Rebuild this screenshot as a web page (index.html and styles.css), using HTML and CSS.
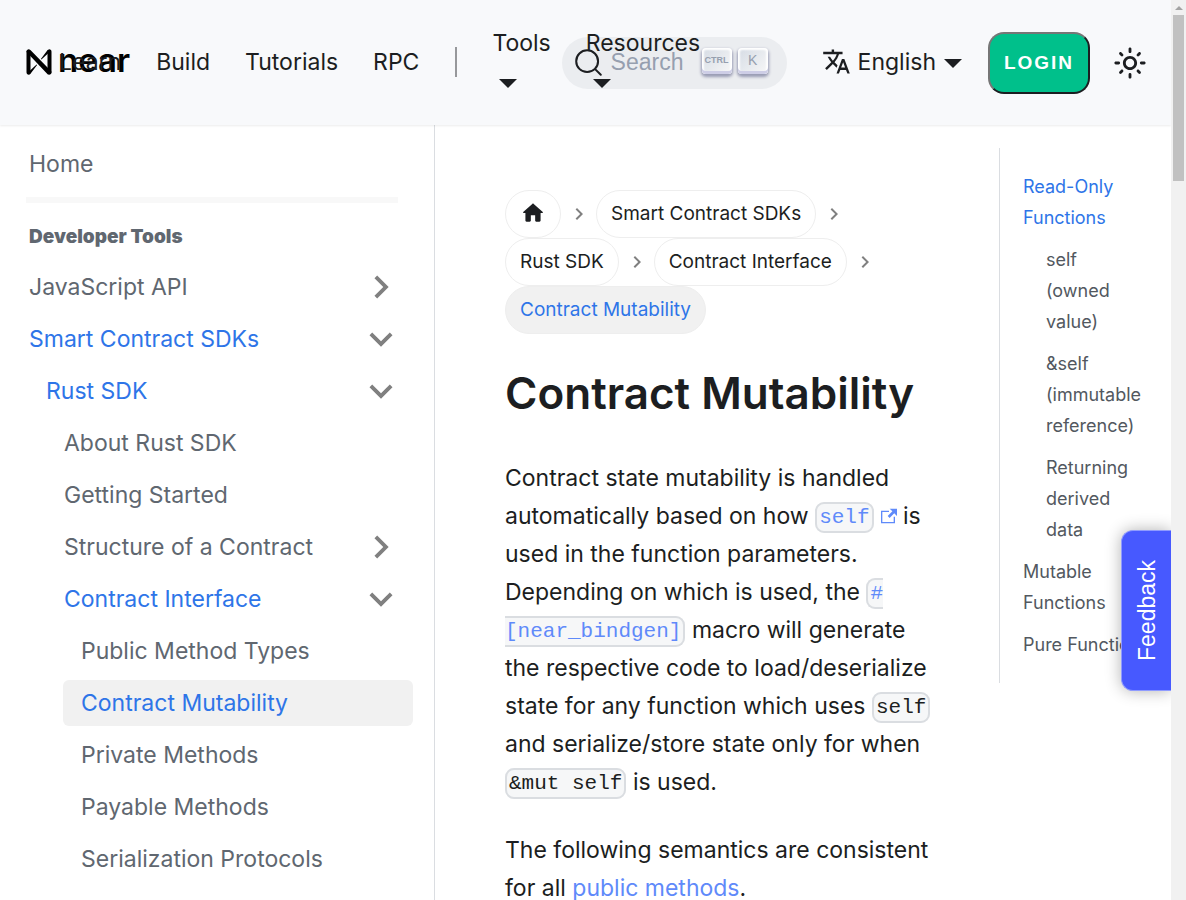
FILE: index.html
```html
<!DOCTYPE html>
<html lang="en">
<head>
<meta charset="utf-8">
<title>Contract Mutability | NEAR Documentation</title>
<link rel="stylesheet" href="styles.css">
</head>
<body>
<svg width="0" height="0" class="defs" aria-hidden="true">
  <symbol id="chev" viewBox="0 0 24 24"><path d="M10 6 8.59 7.41 13.17 12l-4.58 4.59L10 18l6-6z"/></symbol>
</svg>
<div class="page">
  <header class="navbar">
    <nav class="nav-left" aria-label="Main">
      <a class="brand" href="#" aria-label="near home">
        <svg class="brand-mark" viewBox="0 0 26 26"><path fill="none" stroke="#000" stroke-width="4" stroke-linejoin="round" stroke-linecap="round" d="M2.5 2.5v21M23.5 2.5v21"/><path fill="#000" d="M.5 3Q.5.3 3 .4q1 0 1.900 1.200L25.400 22.500q.2 3-2.400 3.100-1.200 0-2.100-1.200z"/><path fill="#000" d="M.8 24.500 10.600 15.600l.5.5L4.300 25q-2 1.300-3.500-.5zM25.300 1.500 15.400 10.400l-.5-.5L21.600 1q2-1.300 3.700.5z"/></svg>
        <span class="brand-name">near</span>
      </a>
      <a class="nav-link" href="#">Learn</a>
      <a class="nav-link" href="#">Build</a>
      <a class="nav-link" href="#">Tutorials</a>
      <a class="nav-link" href="#">RPC</a>
      <span class="nav-sep"></span>
      <a class="nav-link drop" href="#">Tools</a>
      <a class="nav-link drop" href="#">Resources</a>
    </nav>
    <div class="nav-right">
      <button class="search" type="button">
        <svg class="search-icon" viewBox="0 0 20 20"><path d="M14.386 14.386l4.088 4.088-4.088-4.088c-2.942 2.942-7.711 2.942-10.653 0-2.942-2.942-2.942-7.711 0-10.653 2.942-2.942 7.711-2.942 10.653 0 2.942 2.942 2.942 7.711 0 10.653z" fill="none" stroke="currentColor" stroke-width="1.400" stroke-linecap="round" stroke-linejoin="round"/></svg>
        <span class="search-text">Search</span>
        <kbd class="key key-ctrl">CTRL</kbd><kbd class="key">K</kbd>
      </button>
      <a class="language" href="#">
        <svg class="lang-icon" viewBox="0 0 24 24"><path d="M12.870 15.070l-2.540-2.510.03-.03c1.740-1.940 2.980-4.170 3.710-6.530H17V4h-7V2H8v2H1v1.990h11.170C11.500 7.920 10.440 9.750 9 11.350 8.070 10.320 7.300 9.190 6.690 8h-2c.73 1.630 1.730 3.170 2.980 4.560l-5.090 5.020L4 19l5-5 3.110 3.110.76-2.040zM18.500 10h-2L12 22h2l1.120-3h4.750L21 22h2l-4.500-12zm-2.620 7l1.620-4.330L19.120 17h-3.240z"/></svg>
        <span>English</span>
      </a>
      <button class="login" type="button">LOGIN</button>
      <button class="theme" type="button" aria-label="Switch theme">
        <svg viewBox="0 0 24 24"><path d="M12,9c1.650,0,3,1.350,3,3s-1.350,3-3,3s-3-1.350-3-3S10.350,9,12,9 M12,7c-2.760,0-5,2.240-5,5s2.240,5,5,5s5-2.240,5-5 S14.760,7,12,7L12,7z M2,13l2,0c0.550,0,1-0.450,1-1s-0.450-1-1-1l-2,0c-0.550,0-1,0.450-1,1S1.450,13,2,13z M20,13l2,0c0.550,0,1-0.450,1-1 s-0.450-1-1-1l-2,0c-0.550,0-1,0.450-1,1S19.450,13,20,13z M11,2v2c0,0.550,0.450,1,1,1s1-0.450,1-1V2c0-0.550-0.450-1-1-1S11,1.450,11,2z M11,20v2c0,0.550,0.450,1,1,1s1-0.450,1-1v-2c0-0.550-0.450-1-1-1C11.450,19,11,19.450,11,20z M5.990,4.580c-0.390-0.390-1.030-0.390-1.410,0 c-0.390,0.390-0.390,1.030,0,1.410l1.060,1.060c0.390,0.390,1.030,0.390,1.410,0s0.390-1.030,0-1.410L5.990,4.580z M18.360,16.950 c-0.390-0.390-1.030-0.390-1.410,0c-0.390,0.390-0.390,1.030,0,1.410l1.060,1.060c0.390,0.390,1.030,0.390,1.410,0c0.390-0.390,0.390-1.030,0-1.410 L18.360,16.950z M19.420,5.990c0.390-0.390,0.390-1.030,0-1.410c-0.390-0.390-1.030-0.390-1.410,0l-1.060,1.060c-0.390,0.390-0.390,1.030,0,1.410 s1.030,0.390,1.410,0L19.420,5.990z M7.050,18.360c0.390-0.390,0.390-1.030,0-1.410c-0.390-0.390-1.030-0.390-1.410,0l-1.060,1.060 c-0.390,0.390-0.390,1.030,0,1.410s1.030,0.390,1.410,0L7.050,18.360z"/></svg>
      </button>
    </div>
  </header>
  <div class="body">
    <aside class="sidebar">
      <ul class="menu">
        <li><a class="item" href="#">Home</a></li>
        <li class="rule"></li>
        <li class="heading">Developer Tools</li>
        <li><a class="item" href="#">JavaScript API<svg class="arrow"><use href="#chev"/></svg></a></li>
        <li><a class="item on" href="#">Smart Contract SDKs<svg class="arrow open"><use href="#chev"/></svg></a>
          <ul class="menu">
            <li><a class="item on" href="#">Rust SDK<svg class="arrow open"><use href="#chev"/></svg></a>
              <ul class="menu">
                <li><a class="item" href="#">About Rust SDK</a></li>
                <li><a class="item" href="#">Getting Started</a></li>
                <li><a class="item" href="#">Structure of a Contract<svg class="arrow"><use href="#chev"/></svg></a></li>
                <li><a class="item on" href="#">Contract Interface<svg class="arrow open"><use href="#chev"/></svg></a>
                  <ul class="menu">
                    <li><a class="item" href="#">Public Method Types</a></li>
                    <li><a class="item on current" href="#">Contract Mutability</a></li>
                    <li><a class="item" href="#">Private Methods</a></li>
                    <li><a class="item" href="#">Payable Methods</a></li>
                    <li><a class="item" href="#">Serialization Protocols</a></li>
                  </ul>
                </li>
              </ul>
            </li>
          </ul>
        </li>
      </ul>
    </aside>
    <main class="content">
      <nav class="crumbs" aria-label="Breadcrumbs">
        <a class="crumb" href="#" aria-label="Home page"><svg class="home" viewBox="0 0 24 24"><path d="M10 19v-5h4v5c0 .55.45 1 1 1h3c.55 0 1-.45 1-1v-7h1.700c.46 0 .68-.57.33-.87L12.670 3.600c-.38-.34-.96-.34-1.340 0l-8.360 7.530c-.34.3-.13.87.33.87H5v7c0 .55.45 1 1 1h3c.55 0 1-.45 1-1z"/></svg></a>
        <svg class="sep"><use href="#chev"/></svg>
        <a class="crumb" href="#">Smart Contract SDKs</a>
        <svg class="sep"><use href="#chev"/></svg>
        <a class="crumb" href="#">Rust SDK</a>
        <svg class="sep"><use href="#chev"/></svg>
        <a class="crumb" href="#">Contract Interface</a>
        <svg class="sep"><use href="#chev"/></svg>
        <span class="crumb active">Contract Mutability</span>
      </nav>
      <h1>Contract Mutability</h1>
      <p>Contract state mutability is handled automatically based on how <a href="#"><code>self</code><svg class="ext" viewBox="0 0 24 24"><path d="M21 13v10h-21v-19h12v2h-10v15h17v-8h2zm3-12h-10.988l4.035 4-6.977 7.070 2.828 2.828 6.977-7.070 4.125 4.172v-11z"/></svg></a> is used in the function parameters. Depending on which is used, the <a href="#"><code>#[near_bindgen]</code></a> macro will generate the respective code to load/deserialize state for any function which uses <code>self</code> and serialize/store state only for when <code>&amp;mut self</code> is used.</p>
      <p>The following semantics are consistent for all <a href="#">public methods</a>.</p>
    </main>
    <nav class="toc" aria-label="On this page">
      <ul>
        <li><a class="on" href="#">Read-Only Functions</a>
          <ul>
            <li><a href="#">self (owned value)</a></li>
            <li><a href="#">&amp;self (immutable reference)</a></li>
            <li><a href="#">Returning derived data</a></li>
          </ul>
        </li>
        <li><a href="#">Mutable Functions</a></li>
        <li><a class="nowrap" href="#">Pure Functions</a></li>
      </ul>
    </nav>
  </div>
  <button class="feedback" type="button">Feedback</button>
</div>
<div class="scrollbar" aria-hidden="true"><span class="scroll-up"></span><span class="thumb"></span></div>
</body>
</html>
```
FILE: styles.css
```css
* { box-sizing: border-box; }
body {
  margin: 0;
  height: 100vh;
  overflow: hidden;
  display: flex;
  font: 400 23px/38px Inter, "Liberation Sans", sans-serif;
  color: #1c1e21;
  background: #fff;
}
a { color: inherit; text-decoration: none; }
ul { list-style: none; margin: 0; padding: 0; }
button { font: inherit; color: inherit; cursor: pointer; }
.defs { position: absolute; }
.page {
  flex: 1;
  min-width: 0;
  position: relative;
  display: flex;
  flex-direction: column;
}

.navbar {
  flex: none;
  height: 125px;
  padding: 0 22px 0 26px;
  display: flex;
  align-items: center;
  background: #f8f9fb;
  box-shadow: 0 1px 2px rgba(0, 0, 0, .08);
  z-index: 2;
}
.nav-left {
  flex: 1 1 0;
  min-width: 0;
  display: flex;
  align-items: center;
  padding-bottom: 2px;
  position: relative;
  z-index: 1;
}
.brand {
  flex: none;
  width: 16px;
  display: flex;
  align-items: center;
  gap: 6px;
  color: #000;
}
.brand-mark { flex: none; width: 26px; height: 26px; }
.brand-name { font-size: 33px; font-weight: 600; line-height: 36px; padding-bottom: 4px; }
.nav-link { flex: none; padding: 0 18px 0 17px; line-height: 36px; }
.nav-sep { flex: none; width: 2px; height: 30px; margin: 0 18px; background: #97989b; }
.drop::after, .language::after {
  content: "";
  display: block;
  border: 9px solid transparent;
  border-top-color: currentColor;
  border-bottom: 0;
}
.drop::after { margin: 18px 7px 10px; width: 0; }
.nav-right { flex: none; display: flex; align-items: center; }
.search {
  width: 225px;
  height: 52px;
  padding: 0 19px 0 12px;
  border: 0;
  border-radius: 26px;
  background: #ebedf0;
  display: flex;
  align-items: center;
}
.search-icon { width: 29px; height: 29px; margin-right: 8px; }
.search-text { flex: 1; padding-bottom: 2px; text-align: left; color: #969faf; font-family: "Liberation Sans", sans-serif; }
.key {
  width: 30px;
  height: 26px;
  margin: 0 0 3px 6px;
  border-radius: 4px;
  background: linear-gradient(-225deg, #d5dbe4, #f8f8f8);
  box-shadow: inset 0 -3px 0 #cdcde6, inset 0 0 2px 2px #fff, 0 2px 3px 1px rgba(30, 35, 90, .4);
  color: #969faf;
  font: 14px/24px "Liberation Sans", sans-serif;
  text-align: center;
}
.key-ctrl { font: 700 9px/25px "Liberation Sans", sans-serif; }
.language { display: flex; align-items: center; margin-left: 35px; padding-bottom: 2px; }
.lang-icon { width: 29px; height: 29px; margin-right: 7px; fill: currentColor; }
.language::after { margin: 4px 0 0 8px; }
.login {
  width: 102px;
  height: 62px;
  margin: 0 17px 0 26px;
  padding: 0;
  border: 2px outset #1c1e21;
  border-color: #767676 #1c1e21 #1c1e21 #767676;
  border-style: solid;
  border-radius: 16px;
  background: #00c08b;
  color: #fff;
  font: 700 19px/38px "Liberation Sans", sans-serif;
  letter-spacing: 2px;
}
.theme { width: 46px; height: 46px; padding: 6px; margin-right: -4px; border: 0; background: none; }
.theme svg { width: 34px; height: 34px; display: block; fill: currentColor; }

.body { flex: 1; min-height: 0; display: flex; }
.sidebar {
  flex: none;
  width: 435px;
  padding: 16px 21px 0 11px;
  border-right: 1px solid #dadde1;
  color: #606770;
}
.item {
  display: flex;
  align-items: center;
  justify-content: space-between;
  height: 46px;
  margin-bottom: 6px;
  padding: 0 17px 0 18px;
  border-radius: 6px;
}
.menu .menu { padding-left: 17px; }
.menu .menu .menu { padding-left: 18px; margin-top: 1px; }
.menu .menu .menu .menu { padding-left: 17px; }
.on { color: #2e75e8; }
.current { background: #f1f1f1; }
.rule { height: 6px; margin: 10px 15px 16px; background: #f8f8f8; }
.heading { padding: 0 18px; margin-bottom: 9px; font-size: 19px; font-weight: 900; line-height: 36px; }
.arrow { width: 46px; height: 46px; margin-right: -8px; fill: #808080; }
.open { transform: rotate(90deg); }

.content { flex: 1; min-width: 0; padding: 65px 64px 0 70px; }
.crumbs { display: flex; flex-wrap: wrap; align-items: center; font-size: 19px; }
.crumb {
  padding: 0 14px;
  line-height: 46px;
  border: 1px solid #eee;
  border-radius: 24px;
}
.crumb.active { background: #f1f1f1; color: #2e75e8; }
.home { display: block; width: 26px; height: 44px; margin-bottom: 2px; fill: currentColor; }
.sep { width: 24px; height: 24px; margin: 0 5px 0 6px; fill: #808080; }
h1 { margin: 31px 0 38px; font-size: 44px; font-weight: 600; line-height: 56px; }
p { margin: 0 0 30px; }
p a { color: #5f8afa; }
code {
  padding: 2px;
  border: 2px solid #dadde1;
  border-radius: 9px;
  background: #f6f7f8;
  font: 21px "Liberation Mono", monospace;
  vertical-align: middle;
}
.ext { width: 16px; height: 16px; margin-left: 7px; fill: currentColor; }

.toc { flex: none; width: 172px; padding-top: 23px; font-size: 18px; line-height: 31px; color: #525860; }
.toc > ul { padding: 17px 0 12px 23px; border-left: 1px solid #dadde1; }
.toc a { display: block; margin: 6px 0 11px; }
.toc li { padding-right: 23px; }
.toc ul ul { padding-left: 23px; }
.toc ul ul li { padding-right: 5px; }
.nowrap { white-space: nowrap; }

.feedback {
  position: absolute;
  right: 0;
  top: 530px;
  width: 50px;
  height: 161px;
  padding: 0;
  border: 1px solid #8f9bff;
  border-left: 0;
  border-radius: 0 12px 12px 0;
  box-shadow: 0 0 16px rgba(0, 0, 0, .3);
  background: #4759ff;
  color: #fff;
  font-family: "Liberation Sans", sans-serif;
  writing-mode: vertical-rl;
  rotate: 180deg;
  z-index: 3;
}
.scrollbar { flex: none; width: 15px; padding: 0 2px; background: #f1f1f1; z-index: 4; }
.scroll-up { display: block; margin: 6px 2px 5px; border: 4px solid transparent; border-top: 0; border-bottom-color: #a3a3a3; }
.thumb { display: block; height: 166px; background: #c1c1c1; }
```
